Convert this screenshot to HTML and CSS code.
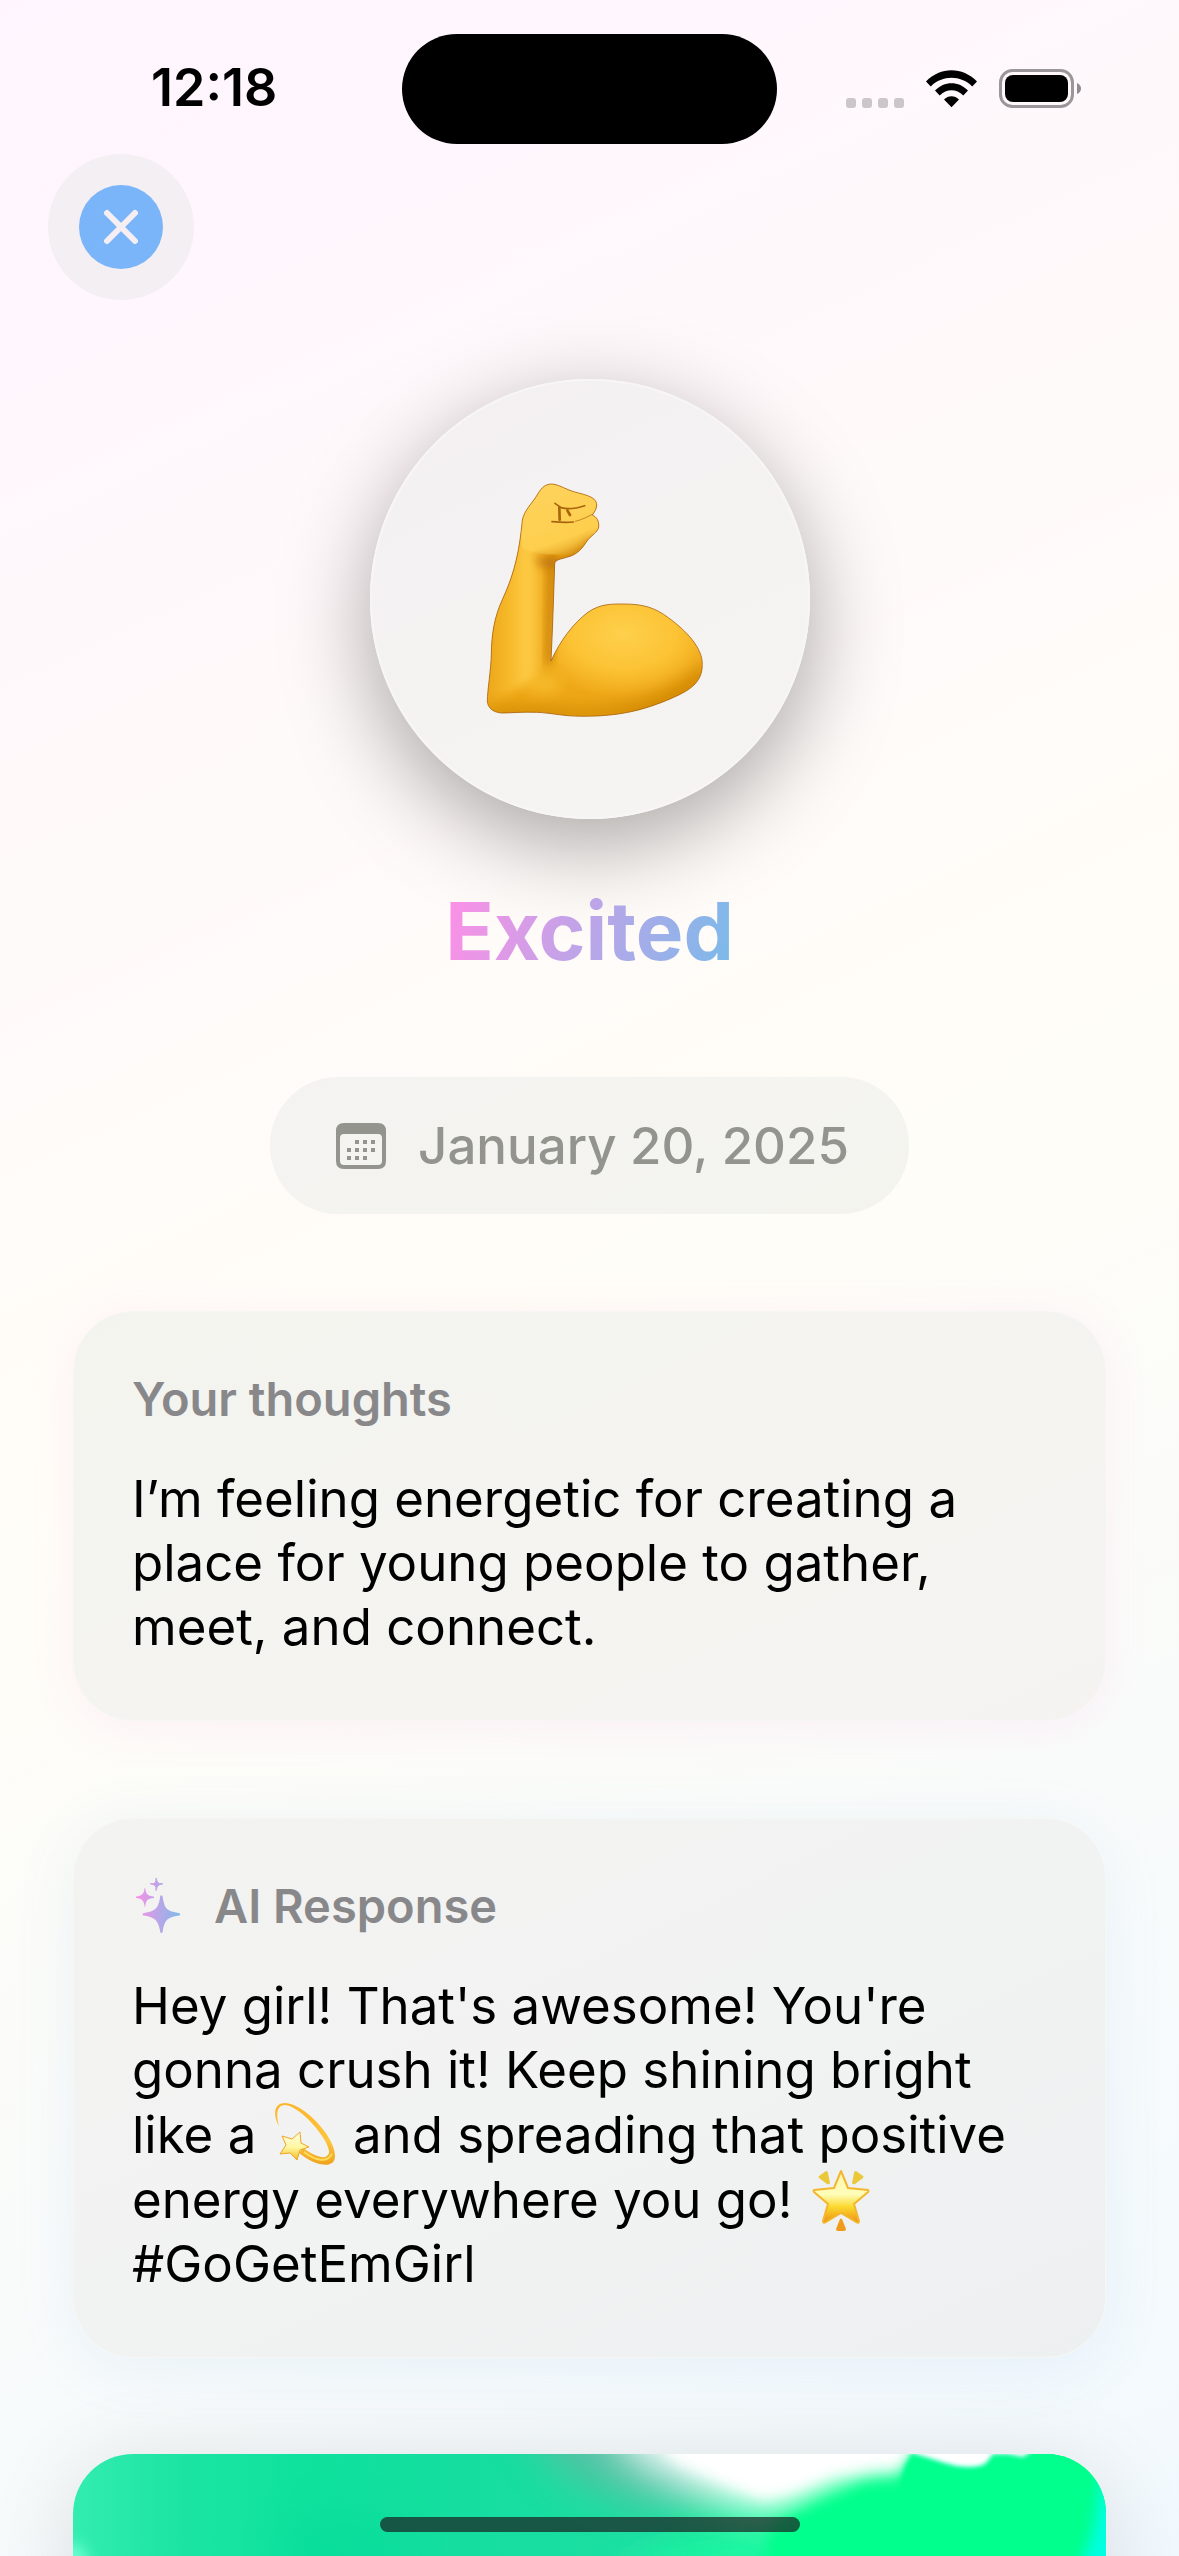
FILE: index.html
```html
<!DOCTYPE html>
<html lang="en">
<head>
  <meta charset="UTF-8">
  <meta name="viewport" content="width=device-width, initial-scale=1">
  <title>Excited</title>
  <link rel="stylesheet" href="styles.css">
</head>
<body>

  <div class="status-bar">
    <span class="time">12:18</span>
    <div class="island"></div>
    <div class="status-icons">
      <div class="signal"><i></i><i></i><i></i><i></i></div>
      <svg class="wifi" viewBox="0 0 51 38">
        <path d="M0 11.500 C14.500 -3.500 36.500 -3.500 51 11.500 L46.200 16.400 C34.500 5 16.500 5 4.800 16.400 Z"/>
        <path d="M9 20.600 C18 10.700 33 10.700 42 20.600 L37.300 25.400 C30.500 18.500 20.500 18.500 13.700 25.400 Z"/>
        <path d="M18 29.600 C22 25 29 25 33 29.600 L25.500 37.300 Z"/>
      </svg>
      <svg class="battery" viewBox="0 0 82 39">
        <rect x="1.500" y="1.500" width="72" height="36" rx="12" fill="none" stroke="#9b9699" stroke-width="3"/>
        <rect x="6" y="6" width="63" height="27" rx="8"/>
        <path d="M78 14 Q82 16 82 19.500 Q82 23 78 25 Z" fill="#8f8b8e"/>
      </svg>
    </div>
  </div>

  <button class="close" aria-label="Close">
    <svg viewBox="0 0 84 84">
      <circle cx="42" cy="42" r="42" fill="#7ab4f9"/>
      <path d="M28 28 L56 56 M56 28 L28 56" stroke="#f5eff3" stroke-width="6" stroke-linecap="round"/>
    </svg>
  </button>

  <main>
    <div class="mood">
      <svg class="arm" viewBox="390 386 720 720">
        <defs>
          <linearGradient id="forearm" x1="450" y1="0" x2="645" y2="0" gradientUnits="userSpaceOnUse">
            <stop offset="0" stop-color="#eda91c"/>
            <stop offset="0.300" stop-color="#f7b92b"/>
            <stop offset="0.600" stop-color="#fecd48"/>
            <stop offset="0.820" stop-color="#f2ae20"/>
            <stop offset="1" stop-color="#cf850c"/>
          </linearGradient>
          <radialGradient id="muscle" cx="850" cy="850" r="290" gradientUnits="userSpaceOnUse" gradientTransform="translate(0 290) scale(1 0.660)">
            <stop offset="0" stop-color="#fed04c"/>
            <stop offset="0.550" stop-color="#fcc335"/>
            <stop offset="1" stop-color="#eea716"/>
          </radialGradient>
          <linearGradient id="fist" x1="600" y1="400" x2="690" y2="640" gradientUnits="userSpaceOnUse">
            <stop offset="0" stop-color="#fed35c"/>
            <stop offset="0.700" stop-color="#fecf4e"/>
            <stop offset="1" stop-color="#dd950f"/>
          </linearGradient>
          <filter id="crease" x="-20%" y="-20%" width="140%" height="140%"><feGaussianBlur stdDeviation="2"/></filter>
          <filter id="soft" x="-30%" y="-30%" width="160%" height="160%"><feGaussianBlur stdDeviation="13"/></filter>
          <filter id="softer" x="-30%" y="-60%" width="160%" height="220%"><feGaussianBlur stdDeviation="22"/></filter>
          <clipPath id="armClip">
            <path id="armShape" d="M634 401 C655 402 672 414 695 422 C724 432 770 436 770 464 C770 478 762 486 757 494 C770 500 778 512 776 530 C774 545 755 555 743 569 C727 594 713 613 680 621 C660 627 646 628 644 640 C641 735 638 830 633 932 C660 872 700 818 745 785 C782 760 815 761 851 761 C910 761 945 772 985 802 C1040 842 1087 892 1087 942 C1087 1000 1045 1022 990 1046 C910 1080 840 1097 735 1098 C665 1098 640 1088 590 1086 C550 1084 515 1088 485 1088 C458 1086 443 1072 442 1052 C442 1020 453 960 454 910 C455 850 463 800 487 748 C528 660 539 590 547 510 C552 480 575 462 594 430 C606 410 616 402 634 401 Z"/>
          </clipPath>
        </defs>
        <g clip-path="url(#armClip)">
          <rect x="430" y="390" width="670" height="720" fill="url(#muscle)"/>
          <path d="M540 500 L645 600 L638 920 C610 970 560 1010 440 1060 L440 850 C470 740 530 650 540 500 Z" fill="url(#forearm)" filter="url(#soft)"/>
          <path d="M645 620 L636 935 L616 950 L626 620 Z" fill="#c47a0a" opacity="0.700" filter="url(#soft)"/>
          <path d="M430 1110 L430 1078 C520 1060 600 1070 740 1074 C900 1066 1010 1020 1100 930 L1100 1110 Z" fill="#cf8606" opacity="0.850" filter="url(#softer)"/>
          <ellipse cx="610" cy="1000" rx="55" ry="26" fill="#fcc93c" opacity="0.700" filter="url(#softer)"/>
          <path d="M542 520 C555 480 590 400 634 398 L780 440 L780 540 L700 610 C650 615 580 615 545 590 Z" fill="url(#fist)" filter="url(#crease)"/>
          <path d="M585 615 C630 635 700 628 745 570 L780 560 L700 650 L600 650 Z" fill="#bd720b" opacity="0.800" filter="url(#soft)"/>
          <g fill="none" stroke="#a9650f" stroke-linecap="round" stroke-linejoin="round" filter="url(#crease)">
            <path d="M645 459 L663 472 C685 478 710 474 734 466" stroke-width="5"/>
            <path d="M658 472 L659 508" stroke-width="8"/>
            <path d="M682 480 L690 494" stroke-width="8"/>
            <path d="M636 514 C660 516 685 517 700 515" stroke-width="5"/>
            <path d="M706 513 C728 508 744 498 757 492" stroke-width="3" opacity="0.700"/>
          </g>
        </g>
        <use href="#armShape" fill="none" stroke="#a9620c" stroke-width="3" opacity="0.800"/>
      </svg>
    </div>

    <h1>Excited</h1>

    <div class="date">
      <svg viewBox="0 0 50 46">
        <path fill-rule="evenodd" d="M8 0 H42 Q50 0 50 8 V38 Q50 46 42 46 H8 Q0 46 0 38 V8 Q0 0 8 0 Z M8 11 Q4 11 4 15 V38 Q4 42 8 42 H42 Q46 42 46 38 V15 Q46 11 42 11 Z"/>
        <path d="M19 17h4v4h-4z M27 17h4v4h-4z M35 17h4v4h-4z M11 25h4v4h-4z M19 25h4v4h-4z M27 25h4v4h-4z M35 25h4v4h-4z M11 33h4v4h-4z M19 33h4v4h-4z M27 33h4v4h-4z"/>
      </svg>
      <time datetime="2025-01-20">January 20, 2025</time>
    </div>

    <section class="card thoughts">
      <h2>Your thoughts</h2>
      <p>I’m feeling energetic for creating a place for young people to gather, meet, and connect.</p>
    </section>

    <section class="card response">
      <h2>
        <svg class="sparkles" viewBox="0 0 52 60">
          <defs>
            <linearGradient id="spark" x1="0" y1="0" x2="52" y2="0" gradientUnits="userSpaceOnUse">
              <stop offset="0" stop-color="#ff8fe6"/>
              <stop offset="1" stop-color="#78bbea"/>
            </linearGradient>
          </defs>
          <g fill="url(#spark)">
            <path d="M29 19 Q31 19 31 22 C33 33 35 35 46 37 Q49 37 49 39 Q49 40 46 40 C35 42 33 45 31 55 Q31 58 29 58 Q28 58 28 55 C26 45 23 42 13 40 Q10 40 10 39 Q10 37 13 37 C23 35 26 33 28 22 Q28 19 29 19 Z"/>
            <path d="M12 11 Q13 11 13 13 C14 18 15 19 20 20 Q22 20 22 21 Q22 22 20 22 C15 23 14 24 13 29 Q13 31 12 31 Q12 31 12 29 C11 24 9 23 5 22 Q3 22 3 21 Q3 20 5 20 C9 19 11 18 12 13 Q12 11 12 11 Z"/>
            <path d="M24 1 Q25 5 26 6 Q27 7 31 7 Q27 8 26 9 Q25 10 24 14 Q24 10 23 9 Q22 8 18 7 Q22 7 23 6 Q24 5 24 1 Z" stroke="url(#spark)" stroke-width="1"/>
          </g>
        </svg>
        AI Response
      </h2>
      <p>Hey girl! That's awesome! You're gonna crush it! Keep shining bright like a
        <svg class="emoji" viewBox="0 0 64 64">
          <defs>
            <linearGradient id="trail" x1="0" y1="0" x2="0" y2="1">
              <stop offset="0" stop-color="#fdb52c"/>
              <stop offset="0.600" stop-color="#fcc53c"/>
              <stop offset="1" stop-color="#efa31f"/>
            </linearGradient>
            <linearGradient id="starFill" x1="0" y1="0" x2="0" y2="1">
              <stop offset="0" stop-color="#fffde0"/>
              <stop offset="0.550" stop-color="#fff7a0"/>
              <stop offset="1" stop-color="#f2bb1d"/>
            </linearGradient>
          </defs>
          <path d="M6 24 C0 14 0 1 12 1 C30 1 62 34 62 54 C62 68 42 64 26 51 L30 46 C44 56 54 58 56 51 C58 40 28 4 12 3 C3 3 3 14 6 24 Z" fill="url(#trail)"/>
          <path d="M31 50 C43 59 54 61 59 52" fill="none" stroke="#ffdc5c" stroke-width="2"/>
          <path d="M27 30 L28 41 L36 45 L27 48 L24 58 L17 51 L7 52 L13 43 L9 34 L19 37 Z" fill="url(#starFill)" stroke="#f0a52b" stroke-width="1" stroke-linejoin="round"/>
        </svg>
        and spreading that positive energy everywhere you go!
        <svg class="emoji" viewBox="0 0 64 64">
          <defs>
            <linearGradient id="glow" x1="0" y1="0" x2="0" y2="1">
              <stop offset="0" stop-color="#fff6b0"/>
              <stop offset="0.450" stop-color="#fffdb8"/>
              <stop offset="0.700" stop-color="#fbd72c"/>
              <stop offset="1" stop-color="#ee9016"/>
            </linearGradient>
          </defs>
          <path d="M32 4 L39 21 L59 23 Q60 24 59 25 L45 37 L50 54 Q50 57 47 55 L32 46 L17 55 Q14 57 14 54 L19 37 L5 25 Q4 24 5 23 L25 21 Z" fill="url(#glow)" stroke="#f3b62d" stroke-width="2" stroke-linejoin="round"/>
          <path d="M10 9 L17 4 Q19 4 19 6 L21 16 Q20 18 18 17 L10 11 Q9 10 10 9 Z M54 9 L47 4 Q45 4 45 6 L43 16 Q44 18 46 17 L54 11 Q55 10 54 9 Z" fill="#ebc83a"/>
          <path d="M31 52 Q32 51 33 52 L37 62 Q37 64 35 64 H29 Q27 64 27 62 Z" fill="#f19b1c"/>
        </svg>
        #GoGetEmGirl</p>
    </section>

    <div class="artwork">
      <svg viewBox="0 0 1033 600">
        <defs>
          <linearGradient id="greens" x1="0" y1="0" x2="1" y2="0">
            <stop offset="0" stop-color="#33edb0"/>
            <stop offset="0.090" stop-color="#1ee5a4"/>
            <stop offset="0.220" stop-color="#0ee29c"/>
            <stop offset="0.380" stop-color="#15dda0"/>
            <stop offset="0.550" stop-color="#1ddfa2"/>
            <stop offset="0.720" stop-color="#00ff8c"/>
            <stop offset="1" stop-color="#00ff8c"/>
          </linearGradient>
          <filter id="blurSmall" x="-20%" y="-50%" width="140%" height="200%"><feGaussianBlur stdDeviation="2"/></filter>
          <filter id="blurMid" x="-20%" y="-50%" width="140%" height="200%"><feGaussianBlur stdDeviation="7"/></filter>
          <filter id="blurBig" x="-40%" y="-80%" width="180%" height="260%"><feGaussianBlur stdDeviation="22"/></filter>
        </defs>
        <rect width="1033" height="600" fill="url(#greens)"/>
        <ellipse cx="0" cy="125" rx="18" ry="36" fill="#6affd0" filter="url(#blurMid)"/>
        <ellipse cx="270" cy="100" rx="60" ry="40" fill="#05d898" opacity="0.400" filter="url(#blurBig)"/>
        <path d="M430 -60 L600 -60 L660 50 L570 50 L490 20 Z" fill="#62bba5" opacity="0.850" filter="url(#blurBig)"/>
        <path d="M560 110 L690 80 L720 140 L540 140 Z" fill="#22f8a6" filter="url(#blurBig)"/>
        <path d="M525 -60 L860 -60 L835 12 L760 30 L697 62 L640 44 L560 4 Z" fill="#fff" filter="url(#blurBig)"/>
        <path d="M690 130 L699 72 L745 50 L790 30 L812 28 L826 30 L833 14 L840 2 L862 4 L1033 -10 L1033 130 Z" fill="#00ff8c" filter="url(#blurMid)"/>
        <path d="M580 -40 L860 -40 L826 16 L800 15 L760 22 L720 38 L690 45 L650 28 L600 6 Z" fill="#fff" filter="url(#blurMid)"/>
        <path d="M827 30 L832 12 L838 1 L850 0 L880 11 L908 12 L920 0 L1033 -20 L1033 60 L850 60 Z" fill="#00ff8c" filter="url(#blurSmall)"/>
        <path d="M843 -8 H966 L950 3 L935 0 L920 0 L913 9 Q908 13 895 13 Q884 13 872 9 L843 0 Z" fill="#fff" stroke="#2fe" stroke-width="1" filter="url(#blurSmall)"/>
        <path d="M1050 20 H1028 C1024 60 1022 80 1006 112 V140 H1050 Z" fill="#00ffe0" filter="url(#blurMid)"/>
      </svg>
    </div>
  </main>

  <div class="home-indicator"></div>

</body>
</html>
```

FILE: styles.css
```css
* {
  box-sizing: border-box;
}
body {
  margin: 0;
  height: 100vh;
  overflow: hidden;
  font-family: Inter, "Liberation Sans", sans-serif;
  color: #000;
  background: linear-gradient(155deg, #fff5fe 0%, #fffdf7 50%, #f2f9fe 100%);
}
svg {
  display: block;
}
.status-bar {
  display: grid;
  grid-template-columns: 1fr 375px 1fr;
  align-items: center;
  padding-top: 34px;
}
.time {
  padding: 0 0 2px 151px;
  font-size: 52px;
  line-height: 60px;
  font-weight: 600;
}
.island {
  height: 110px;
  border-radius: 55px;
  background: #000;
}
.status-icons {
  display: flex;
  justify-content: flex-end;
  align-items: flex-end;
  gap: 22px;
  padding: 0 98px 2px 0;
}
.signal {
  display: flex;
  gap: 6px;
}
.signal i {
  width: 10px;
  height: 10px;
  border-radius: 3px;
  background: #cbc6ca;
}
.wifi {
  width: 51px;
  height: 38px;
}
.battery {
  width: 82px;
  height: 39px;
}
.close {
  display: flex;
  align-items: center;
  justify-content: center;
  width: 146px;
  height: 146px;
  margin: 10px 48px 0;
  padding: 0;
  border: none;
  border-radius: 50%;
  background: #f4eff3;
  cursor: pointer;
}
.close svg {
  width: 84px;
  height: 84px;
}
main {
  display: flex;
  flex-direction: column;
  align-items: center;
  padding: 0 73px;
}
.mood {
  display: flex;
  align-items: center;
  justify-content: center;
  width: 440px;
  height: 440px;
  margin-top: 79px;
  border: 2px solid #f7f5f6;
  border-radius: 50%;
  background: linear-gradient(155deg, #f4f0f3, #f4f3f1 60%, #f5f4f2);
  box-shadow: 0 26px 88px rgba(0, 0, 0, 0.34);
}
.arm {
  width: 240px;
  height: 240px;
}
h1 {
  margin: 64px 0 0;
  font-size: 80px;
  line-height: 96px;
  font-weight: 700;
  color: transparent;
  background: linear-gradient(105deg, #ff8fe6, #78bbea);
  background-clip: text;
  -webkit-background-clip: text;
}
.date {
  display: flex;
  align-items: center;
  gap: 32px;
  margin-top: 98px;
  padding: 36px 60px 36px 66px;
  border-radius: 68px;
  background: linear-gradient(155deg, #f4f3f1, #f4f4ef);
  color: #94948f;
  font-size: 51px;
  line-height: 65px;
  font-weight: 500;
}
.date svg {
  width: 50px;
  height: 46px;
  fill: #94948f;
}
.card {
  width: 100%;
  margin-top: 97px;
  padding: 58px 58px 61px;
  border: 1px solid #f6f6f4;
  border-radius: 60px;
}
.thoughts {
  background: linear-gradient(155deg, #f4f4ef, #f4f3f1);
  box-shadow: 0 6px 44px rgba(255, 150, 220, 0.12);
}
.response {
  background: linear-gradient(155deg, #f3f3f1, #f1f2f2 55%, #edf0f1);
  box-shadow: 0 10px 60px rgba(110, 165, 220, 0.11);
}
h2 {
  display: flex;
  align-items: center;
  gap: 30px;
  margin: 0 0 39px;
  font-size: 47px;
  line-height: 58px;
  font-weight: 600;
  color: #88888b;
}
.sparkles {
  width: 52px;
  height: 58px;
}
.card p {
  margin: 0;
  font-size: 51px;
  line-height: 64px;
}
.emoji {
  display: inline-block;
  width: 64px;
  height: 64px;
  margin: 0 2px;
  vertical-align: -13px;
}
.artwork {
  width: 100%;
  margin-top: 96px;
  border-radius: 60px;
  overflow: hidden;
  box-shadow: 0 12px 90px rgba(0, 0, 0, 0.12);
}
.artwork svg {
  width: 100%;
}
.home-indicator {
  position: fixed;
  bottom: 24px;
  left: 50%;
  width: 420px;
  height: 15px;
  margin-left: -210px;
  border-radius: 8px;
  background: rgba(24, 30, 32, 0.7);
}
```
